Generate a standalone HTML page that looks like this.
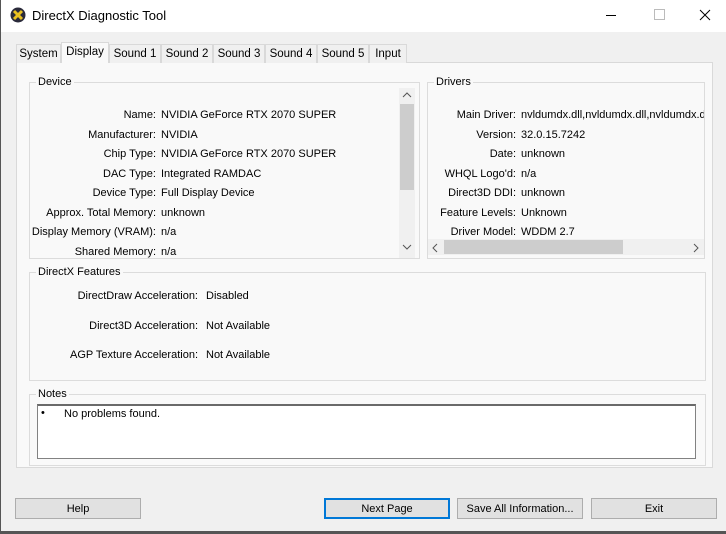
<!DOCTYPE html><html><head><style>
*{margin:0;padding:0;box-sizing:border-box}
body{width:726px;height:534px;background:#f0f0f0;font:11px "Liberation Sans",sans-serif;color:#000;position:relative;overflow:hidden;border-left:1px solid #555;}
.a{position:absolute;white-space:nowrap}
.tb{position:absolute;left:0;top:0;width:726px;height:32px;background:#fff}
.tab{position:absolute;top:44px;height:19px;border:1px solid #d9d9d9;border-bottom:none;background:#f0f0f0;text-align:center;line-height:18px;font-size:11.5px}
.panel{position:absolute;left:15px;top:62px;width:697px;height:406px;background:#f9f9f9;border:1px solid #d9d9d9}
.g{position:absolute;border:1px solid #dcdcdc}
.gt{position:absolute;top:-7px;left:6px;background:#f9f9f9;padding:0 2px}
.l{position:absolute;text-align:right;white-space:nowrap}
.btn{position:absolute;top:498px;width:126px;height:21px;background:#e1e1e1;border:1px solid #adadad;text-align:center;line-height:20px}
</style></head><body>
<div class="tb">
<svg class="a" style="left:9px;top:7px" width="16" height="16" viewBox="0 0 16 16"><circle cx="8" cy="8" r="7.5" fill="#2a2a3a"/><path d="M4 4L12 12M12 4L4 12" stroke="#e8c020" stroke-width="3"/></svg>
<div class="a" style="left:31px;top:8px;font-size:13px">DirectX Diagnostic Tool</div>
<div class="a" style="left:605px;top:15px;width:10px;border-top:1px solid #000"></div>
<div class="a" style="left:653px;top:9px;width:11px;height:11px;border:1px solid #bbb"></div>
<svg class="a" style="left:698px;top:9px" width="12" height="12"><path d="M1 1L11 11M11 1L1 11" stroke="#000"/></svg>
</div>
<div class="panel">
<div class="g" style="left:12px;top:19px;width:391px;height:177px"><span class="gt">Device</span></div>
<div class="g" style="left:410px;top:19px;width:278px;height:177px"><span class="gt">Drivers</span></div>
<div class="g" style="left:12px;top:209px;width:677px;height:109px"><span class="gt">DirectX Features</span></div>
<div class="g" style="left:12px;top:331px;width:677px;height:72px"><span class="gt">Notes</span></div>
</div>
<div class="tab" style="left:15px;width:45px">System</div>
<div class="tab" style="left:60px;width:48px;top:42px;height:21px;background:#f9f9f9;z-index:2">Display</div>
<div class="tab" style="left:108px;width:52px">Sound 1</div>
<div class="tab" style="left:160px;width:52px">Sound 2</div>
<div class="tab" style="left:212px;width:52px">Sound 3</div>
<div class="tab" style="left:264px;width:52px">Sound 4</div>
<div class="tab" style="left:316px;width:52px">Sound 5</div>
<div class="tab" style="left:368px;width:38px">Input</div>

<div class="l" style="left:20px;width:135px;top:106px;line-height:19.5px">Name:<br>Manufacturer:<br>Chip Type:<br>DAC Type:<br>Device Type:<br>Approx. Total Memory:<br>Display Memory (VRAM):<br>Shared Memory:</div>
<div class="a" style="left:160px;top:106px;line-height:19.5px">NVIDIA GeForce RTX 2070 SUPER<br>NVIDIA<br>NVIDIA GeForce RTX 2070 SUPER<br>Integrated RAMDAC<br>Full Display Device<br>unknown<br>n/a<br>n/a</div>
<div class="a" style="left:398px;top:88px;width:16px;height:170px;background:#f0f0f0"></div>
<div class="a" style="left:399px;top:104px;width:14px;height:86px;background:#cdcdcd"></div>
<svg class="a" style="left:401px;top:91px" width="10" height="8"><path d="M1 6L5 2L9 6" stroke="#555" fill="none"/></svg>
<svg class="a" style="left:401px;top:243px" width="10" height="8"><path d="M1 2L5 6L9 2" stroke="#555" fill="none"/></svg>

<div class="l" style="left:420px;width:95px;top:106px;line-height:19.5px">Main Driver:<br>Version:<br>Date:<br>WHQL Logo'd:<br>Direct3D DDI:<br>Feature Levels:<br>Driver Model:</div>
<div class="a" style="left:520px;top:106px;line-height:19.5px;width:183px;overflow:hidden">nvldumdx.dll,nvldumdx.dll,nvldumdx.dll<br>32.0.15.7242<br>unknown<br>n/a<br>unknown<br>Unknown<br>WDDM 2.7</div>
<div class="a" style="left:427px;top:239px;width:276px;height:16px;background:#f0f0f0"></div>
<div class="a" style="left:443px;top:240px;width:179px;height:14px;background:#cdcdcd"></div>
<svg class="a" style="left:430px;top:243px" width="8" height="10"><path d="M6 1L2 5L6 9" stroke="#555" fill="none"/></svg>
<svg class="a" style="left:691px;top:243px" width="8" height="10"><path d="M2 1L6 5L2 9" stroke="#555" fill="none"/></svg>

<div class="l" style="left:40px;width:157px;top:282px;line-height:29.5px">DirectDraw Acceleration:<br>Direct3D Acceleration:<br>AGP Texture Acceleration:</div>
<div class="a" style="left:205px;top:282px;line-height:29.5px">Disabled<br>Not Available<br>Not Available</div>

<div class="a" style="left:36px;top:404px;width:659px;height:55px;background:#fff;border:1px solid #828282;border-top:2px solid #6a6a6a"></div>
<div class="a" style="left:40px;top:407px">•</div>
<div class="a" style="left:63px;top:408px">No problems found.</div>

<div class="btn" style="left:14px">Help</div>
<div class="btn" style="left:323px;border:2px solid #0078d7;line-height:18px">Next Page</div>
<div class="btn" style="left:456px">Save All Information...</div>
<div class="btn" style="left:590px">Exit</div>
<div class="a" style="left:0;top:531px;width:726px;height:3px;background:#555"></div>
</body></html>
